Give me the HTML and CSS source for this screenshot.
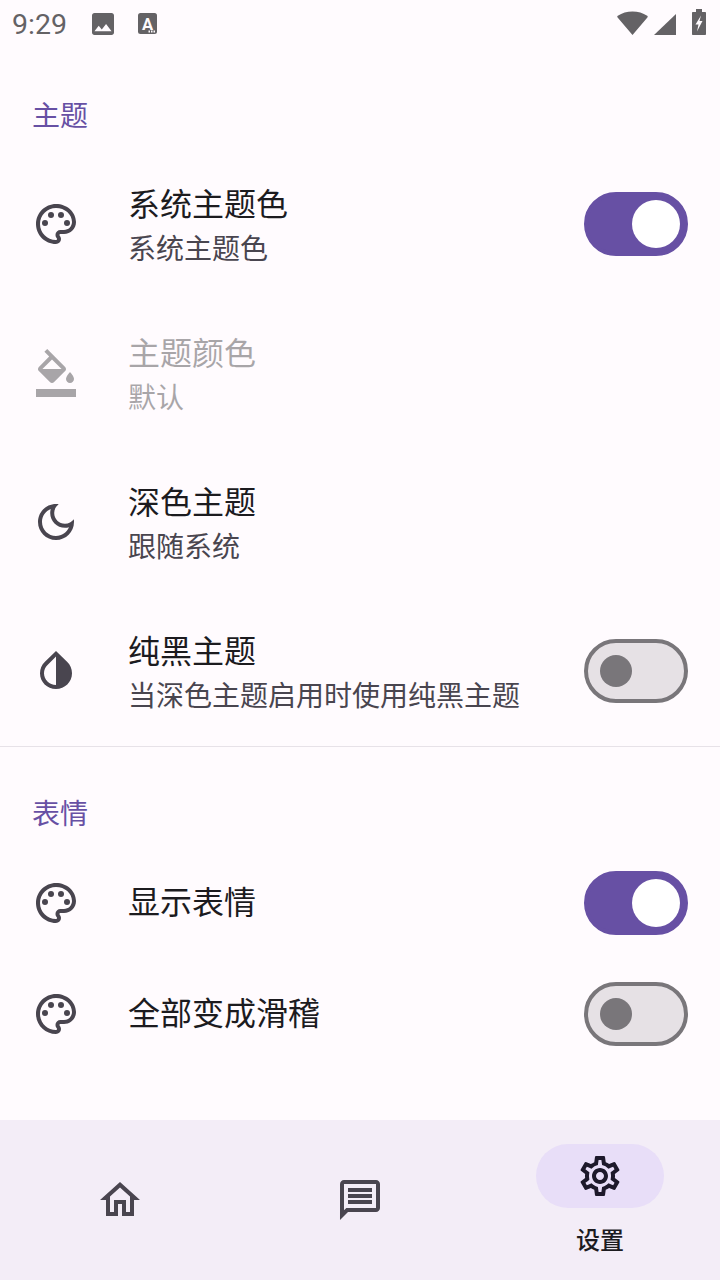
FILE: index.html
```html
<!DOCTYPE html>
<html lang="zh-CN">
<head>
<meta charset="utf-8">
<title>设置</title>
<link rel="stylesheet" href="styles.css">
</head>
<body>
<svg class="defs" width="0" height="0" aria-hidden="true">
  <defs>
    <symbol id="palette" viewBox="0 0 24 24">
      <path d="M12 22C6.49 22 2 17.51 2 12S6.49 2 12 2s10 4.04 10 9c0 3.31-2.69 6-6 6h-1.77c-.28 0-.5.22-.5.5 0 .12.05.23.13.33.41.47.64 1.06.64 1.67A2.5 2.5 0 0 1 12 22zm0-18c-4.41 0-8 3.59-8 8s3.59 8 8 8c.28 0 .5-.22.5-.5a.54.54 0 0 0-.14-.35c-.41-.46-.63-1.05-.63-1.65a2.5 2.5 0 0 1 2.5-2.5H16c2.21 0 4-1.79 4-4 0-3.86-3.59-7-8-7z"/>
      <circle cx="6.5" cy="11.5" r="1.5"/><circle cx="9.5" cy="7.5" r="1.5"/><circle cx="14.5" cy="7.5" r="1.5"/><circle cx="17.5" cy="11.5" r="1.5"/>
    </symbol>
  </defs>
</svg>
<div class="screen">
  <header class="status">
    <span class="clock">9:29</span>
    <svg class="st-image" viewBox="3 3 18 18"><path d="M21 19V5c0-1.1-.9-2-2-2H5c-1.1 0-2 .9-2 2v14c0 1.1.9 2 2 2h14c1.1 0 2-.9 2-2zM8.5 13.5l2.5 3.01L14.5 12l4.500 6H5l3.5-4.5z"/></svg>
    <svg class="st-font" viewBox="0 0 19 21"><rect x="0" y="0" width="19" height="21" rx="2.5"/><text class="st-font-a" x="9.500" y="16.700" text-anchor="middle">A</text><rect class="st-dot" x="10.500" y="17.500" width="1.500" height="2"/><rect class="st-dot" x="13" y="17.500" width="1.500" height="2"/><rect class="st-dot" x="15.500" y="17.500" width="1.500" height="2"/></svg>
    <span class="status-gap"></span>
    <svg class="st-wifi" viewBox="0 0 31 24"><path d="M15.500 24 .6 6.500C.1 6 .2 5.200.8 4.800 5 1.900 10 .4 15.500.4S26 1.900 30.200 4.800c.6.4.7 1.200.2 1.700z"/></svg>
    <svg class="st-signal" viewBox="0 0 22 21"><path d="M22 0v21H0z"/></svg>
    <svg class="st-batt" viewBox="0 0 14 26"><path fill-rule="evenodd" d="M4 0h6v3h3c.6 0 1 .4 1 1v21c0 .6-.4 1-1 1H1c-.6 0-1-.4-1-1V4c0-.6.4-1 1-1h3zM9 6.500 3.500 15.500h3l-1.500 7 5.500-10.500h-3z"/></svg>
  </header>

  <main class="content">
    <section class="section section-first">
      <h2 class="section-title">主题</h2>
      <div class="row row-two">
        <svg class="icon"><use href="#palette"/></svg>
        <div class="text"><div class="title">系统主题色</div><div class="summary">系统主题色</div></div>
        <div class="switch on"><span class="thumb"></span></div>
      </div>
      <div class="row row-two disabled">
        <svg class="icon" viewBox="0 0 24 24"><path d="M16.56 8.94L7.62 0 6.21 1.41l2.38 2.38-5.15 5.15c-.59.59-.59 1.54 0 2.12l5.5 5.5c.29.29.68.44 1.06.44s.77-.15 1.06-.44l5.5-5.5c.59-.58.59-1.53 0-2.12zM5.21 10L10 5.21 14.79 10H5.21zM19 11.5s-2 2.17-2 3.5c0 1.1.9 2 2 2s2-.9 2-2c0-1.33-2-3.5-2-3.5z"/><path d="M2 20h20v4H2z"/></svg>
        <div class="text"><div class="title">主题颜色</div><div class="summary">默认</div></div>
      </div>
      <div class="row row-two">
        <svg class="icon" viewBox="0 0 24 24"><path d="M9.37 5.510c-.18.64-.27 1.310-.27 1.990 0 4.080 3.320 7.400 7.400 7.400.68 0 1.350-.09 1.990-.27C17.450 17.190 14.930 19 12 19c-3.860 0-7-3.140-7-7 0-2.930 1.810-5.450 4.370-6.490zM12 3c-4.970 0-9 4.030-9 9s4.030 9 9 9 9-4.030 9-9c0-.46-.04-.92-.1-1.360-.98 1.370-2.580 2.260-4.400 2.260-2.980 0-5.400-2.420-5.400-5.400 0-1.810.89-3.420 2.260-4.400-.44-.06-.9-.1-1.360-.1z"/></svg>
        <div class="text"><div class="title">深色主题</div><div class="summary">跟随系统</div></div>
      </div>
      <div class="row row-two">
        <svg class="icon" viewBox="0 0 24 24"><path d="M12 4.810V19c-3.310 0-6-2.630-6-5.870 0-1.560.62-3.030 1.750-4.140L12 4.810M6.350 7.560C4.900 8.990 4 10.960 4 13.130 4 17.480 7.580 21 12 21s8-3.520 8-7.870c0-2.170-.9-4.140-2.350-5.570L12 2 6.350 7.560z"/></svg>
        <div class="text"><div class="title">纯黑主题</div><div class="summary">当深色主题启用时使用纯黑主题</div></div>
        <div class="switch"><span class="thumb"></span></div>
      </div>
    </section>
    <section class="section section-second">
      <h2 class="section-title">表情</h2>
      <div class="row row-one">
        <svg class="icon"><use href="#palette"/></svg>
        <div class="text"><div class="title">显示表情</div></div>
        <div class="switch on"><span class="thumb"></span></div>
      </div>
      <div class="row row-one">
        <svg class="icon"><use href="#palette"/></svg>
        <div class="text"><div class="title">全部变成滑稽</div></div>
        <div class="switch"><span class="thumb"></span></div>
      </div>
    </section>
  </main>

  <nav class="nav">
    <div class="nav-item">
      <svg class="icon" viewBox="0 0 24 24"><path d="M12 5.690l5 4.500V18h-2v-6H9v6H7v-7.810l5-4.500M12 3L2 12h3v8h6v-6h2v6h6v-8h3L12 3z"/></svg>
    </div>
    <div class="nav-item">
      <svg class="icon" viewBox="0 0 24 24"><path d="M4 4h16v12H5.170L4 17.170V4m0-2c-1.100 0-1.990.9-1.990 2L2 22l4-4h14c1.100 0 2-.9 2-2V4c0-1.100-.9-2-2-2H4zm2 10h12v2H6v-2zm0-3h12v2H6V9zm0-3h12v2H6V6z"/></svg>
    </div>
    <div class="nav-item selected">
      <div class="pill">
        <svg class="icon" viewBox="0 0 24 24"><path d="M19.430 12.980c.04-.32.07-.64.07-.98 0-.34-.03-.66-.07-.98l2.110-1.650c.19-.15.24-.42.12-.64l-2-3.460c-.09-.16-.26-.25-.44-.25-.06 0-.12.01-.17.03l-2.490 1c-.52-.4-1.080-.73-1.690-.98l-.38-2.650C14.460 2.180 14.250 2 14 2h-4c-.25 0-.46.18-.49.42l-.38 2.650c-.61.25-1.170.59-1.690.98l-2.490-1c-.06-.02-.12-.03-.18-.03-.17 0-.34.09-.43.25l-2 3.460c-.13.22-.07.49.12.64l2.110 1.650c-.04.32-.07.65-.07.98 0 .33.03.66.07.98l-2.110 1.650c-.19.15-.24.42-.12.64l2 3.460c.09.16.26.25.44.25.06 0 .12-.01.17-.03l2.490-1c.52.4 1.080.73 1.690.98l.38 2.650c.03.24.24.42.49.42h4c.25 0 .46-.18.49-.42l.38-2.650c.61-.25 1.170-.59 1.690-.98l2.490 1c.06.02.12.03.18.03.17 0 .34-.09.43-.25l2-3.460c.12-.22.07-.49-.12-.64l-2.110-1.650zm-1.980-1.710c.04.31.05.52.05.73 0 .21-.02.43-.05.73l-.14 1.130.89.7 1.080.84-.7 1.210-1.270-.51-1.040-.42-.9.68c-.43.32-.84.56-1.250.73l-1.060.43-.16 1.130-.2 1.350h-1.400l-.19-1.350-.16-1.130-1.060-.43c-.43-.18-.83-.41-1.230-.71l-.91-.7-1.060.43-1.270.51-.7-1.210 1.080-.84.89-.7-.14-1.130c-.03-.31-.05-.54-.05-.74s.02-.43.05-.73l.14-1.130-.89-.7-1.080-.84.7-1.210 1.270.51 1.040.42.9-.68c.43-.32.84-.56 1.250-.73l1.060-.43.16-1.130.2-1.350h1.390l.19 1.350.16 1.130 1.060.43c.43.18.83.41 1.230.71l.91.7 1.060-.43 1.270-.51.7 1.210-1.070.85-.89.7.14 1.130zM12 8c-2.210 0-4 1.790-4 4s1.790 4 4 4 4-1.790 4-4-1.790-4-4-4zm0 6c-1.100 0-2-.9-2-2s.9-2 2-2 2 .9 2 2-.9 2-2 2z"/></svg>
      </div>
      <span class="nav-label">设置</span>
    </div>
  </nav>
</div>
</body>
</html>
```

FILE: styles.css
```css
* { box-sizing: border-box; }
html, body { margin: 0; padding: 0; }
body {
  background: #fffbfe;
  color: #1c1b1f;
  font-family: "Noto Sans CJK SC", "Noto Sans", Roboto, sans-serif;
}
.defs { display: block; height: 0; }
.screen {
  width: 720px;
  height: 1280px;
  display: flex;
  flex-direction: column;
  overflow: hidden;
}

/* status bar */
.status {
  height: 48px;
  flex: none;
  display: flex;
  align-items: flex-start;
  padding-left: 12px;
  fill: #646265;
}
.clock {
  font-family: Roboto, sans-serif;
  font-size: 28.5px;
  line-height: 50px;
  color: #646265;
  width: 80px;
}
.st-image { width: 22px; height: 22px; margin-top: 13px; }
.st-font { width: 19px; height: 21px; margin-top: 13px; margin-left: 24px; }
.st-font-a { font-family: Roboto, sans-serif; font-weight: 700; font-size: 16.5px; fill: #fffbfe; }
.st-dot { fill: #fffbfe; }
.status-gap { flex: 1; }
.st-wifi { width: 31px; height: 24px; margin-top: 11px; }
.st-signal { width: 22px; height: 21px; margin-top: 14px; margin-left: 6px; }
.st-batt { width: 14px; height: 26px; margin-top: 9px; margin-left: 16px; margin-right: 14px; }

/* content */
.content { flex: 1; }
.section-first { padding: 46px 0 1px; }
.section-second {
  border-top: 1px solid #e7e2e8;
  padding-top: 45px;
}
.section-title {
  margin: 0 0 15px;
  padding-left: 32px;
  font-size: 28px;
  font-weight: 400;
  line-height: 40px;
  color: #6750a4;
}
.row {
  display: flex;
  align-items: center;
  padding: 0 32px;
}
.row-two { height: 149px; }
.row-one { height: 111px; }
.row-one .text { padding-bottom: 6px; }
.icon {
  width: 48px;
  height: 48px;
  flex: none;
  fill: #49454f;
}
.text { flex: 1; margin-left: 48px; padding-bottom: 4px; }
.title { font-size: 32px; line-height: 48px; }
.summary { margin: 1px 0 -1px; font-size: 28px; line-height: 40px; color: #49454f; }
.disabled { opacity: .38; }
.disabled .summary { color: #1c1b1f; }
.disabled .icon { fill: #1c1b1f; }

/* switch */
.switch {
  width: 104px;
  height: 64px;
  flex: none;
  display: flex;
  align-items: center;
  padding-left: 12px;
  border: 4px solid #79767a;
  border-radius: 32px;
  background: #e6e1e5;
}
.thumb {
  width: 32px;
  height: 32px;
  border-radius: 50%;
  background: #79767a;
}
.switch.on {
  justify-content: flex-end;
  padding: 0 4px 0 0;
  border-color: #6750a4;
  background: #6750a4;
}
.switch.on .thumb {
  width: 48px;
  height: 48px;
  background: #fff;
}

/* nav */
.nav {
  height: 160px;
  flex: none;
  display: flex;
  background: #f3edf7;
}
.nav-item {
  flex: 1;
  display: flex;
  flex-direction: column;
  align-items: center;
  justify-content: center;
}
.nav-item.selected { justify-content: flex-start; padding-top: 24px; }
.pill {
  width: 128px;
  height: 64px;
  display: flex;
  align-items: center;
  justify-content: center;
  border-radius: 32px;
  background: #e8def8;
}
.nav-item.selected .icon { fill: #1d192b; }
.nav-label {
  margin-top: 13px;
  font-size: 24px;
  font-weight: 500;
  line-height: 36px;
  color: #1c1b1f;
}
```
